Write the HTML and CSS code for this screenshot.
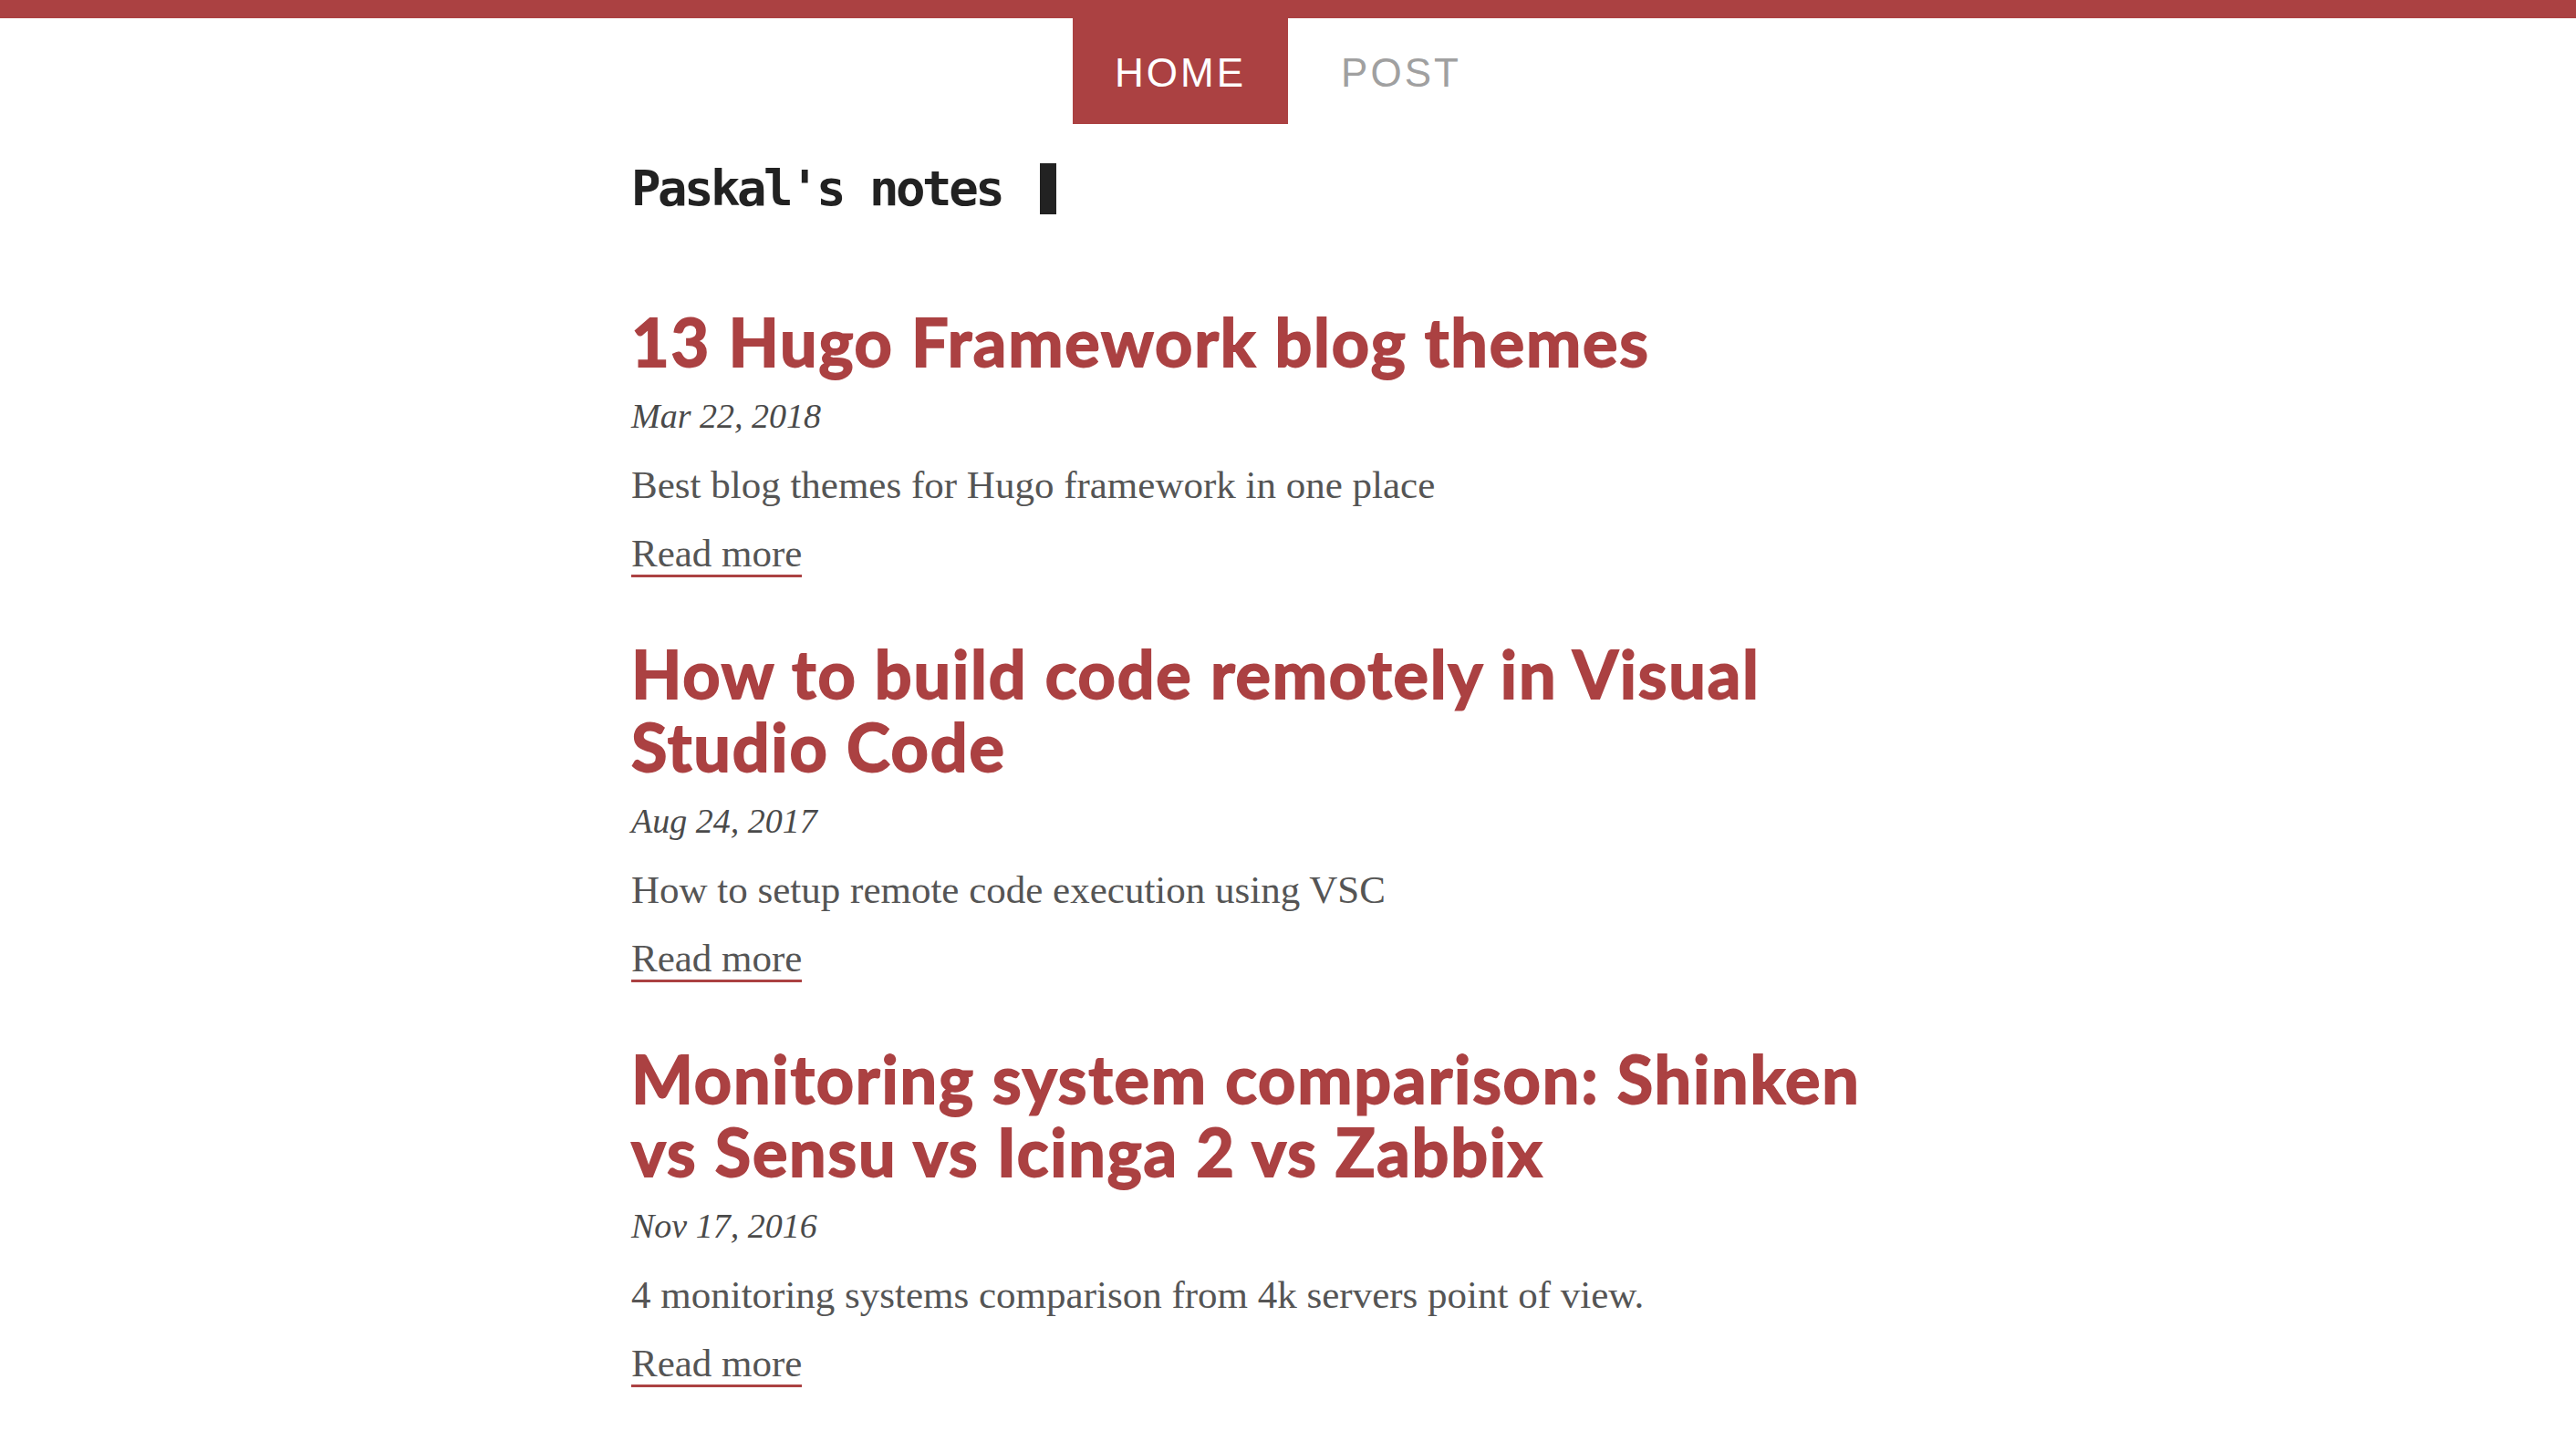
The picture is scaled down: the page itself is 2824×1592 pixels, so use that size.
FILE: index.html
```html
<!DOCTYPE html>
<html lang="en">
<head>
    <meta charset="UTF-8">
    <meta name="viewport" content="width=device-width, initial-scale=1.0">
    <title>Paskal's notes</title>
    <link rel="stylesheet" href="styles.css">
</head>
<body>
    <header class="topbar">
        <nav class="menu">
            <a class="menu-item active" href="#">HOME</a>
            <a class="menu-item" href="#">POST</a>
        </nav>
    </header>
    <main class="content">
        <h1 class="site-title">Paskal's notes<span class="cursor"></span></h1>

        <article class="post">
            <h2 class="post-title"><a href="#">13 Hugo Framework blog themes</a></h2>
            <div class="post-date">Mar 22, 2018</div>
            <p class="post-summary">Best blog themes for Hugo framework in one place</p>
            <div class="post-more"><a class="read-more" href="#">Read more</a></div>
        </article>

        <article class="post">
            <h2 class="post-title"><a href="#">How to build code remotely in Visual Studio Code</a></h2>
            <div class="post-date">Aug 24, 2017</div>
            <p class="post-summary">How to setup remote code execution using VSC</p>
            <div class="post-more"><a class="read-more" href="#">Read more</a></div>
        </article>

        <article class="post">
            <h2 class="post-title"><a href="#">Monitoring system comparison: Shinken vs Sensu vs Icinga 2 vs Zabbix</a></h2>
            <div class="post-date">Nov 17, 2016</div>
            <p class="post-summary">4 monitoring systems comparison from 4k servers point of view.</p>
            <div class="post-more"><a class="read-more" href="#">Read more</a></div>
        </article>
    </main>
</body>
</html>
```

FILE: styles.css
```css
body {
    margin: 0;
    background-color: #ffffff;
    font-family: "Liberation Serif", serif;
    color: #555555;
}

a {
    text-decoration: none;
}

.topbar {
    border-top: 20px solid #ab4142;
}

.menu {
    display: flex;
    justify-content: center;
    gap: 12px;
}

.menu-item {
    font-family: "Liberation Sans", Arial, sans-serif;
    font-size: 44px;
    letter-spacing: 3px;
    line-height: 112px;
    padding: 4px 46px 0;
    color: #a0a0a0;
}

.menu-item.active {
    background-color: #ab4142;
    color: #ffffff;
}

.content {
    width: 1440px;
    margin: 0 auto;
}

.site-title {
    font-family: "DejaVu Sans Mono", monospace;
    font-weight: bold;
    font-size: 54px;
    letter-spacing: -3.5px;
    line-height: 60px;
    color: #222222;
    margin: 41px 0 97px;
}

.cursor {
    display: inline-block;
    width: 18px;
    height: 56px;
    margin-left: 42px;
    vertical-align: -10px;
    background-color: #222222;
}

.post {
    margin-bottom: 61px;
}

.post-title {
    font-family: Lato, sans-serif;
    font-weight: 700;
    font-size: 72px;
    line-height: 80px;
    letter-spacing: 1.8px;
    -webkit-text-stroke: 1.8px #ab4142;
    max-width: 1400px;
    margin: 0 0 17px;
}

.post-title a {
    color: #ab4142;
}

.post-date {
    font-style: italic;
    font-size: 38px;
    line-height: 50px;
    color: #4a4a4a;
    margin-bottom: 21px;
}

.post-summary {
    font-size: 43px;
    line-height: 60px;
    margin: 0 0 15px;
}

.post-more {
    font-size: 43px;
    line-height: 60px;
}

.read-more {
    color: #555555;
    border-bottom: 3px solid #ab4142;
}
```
